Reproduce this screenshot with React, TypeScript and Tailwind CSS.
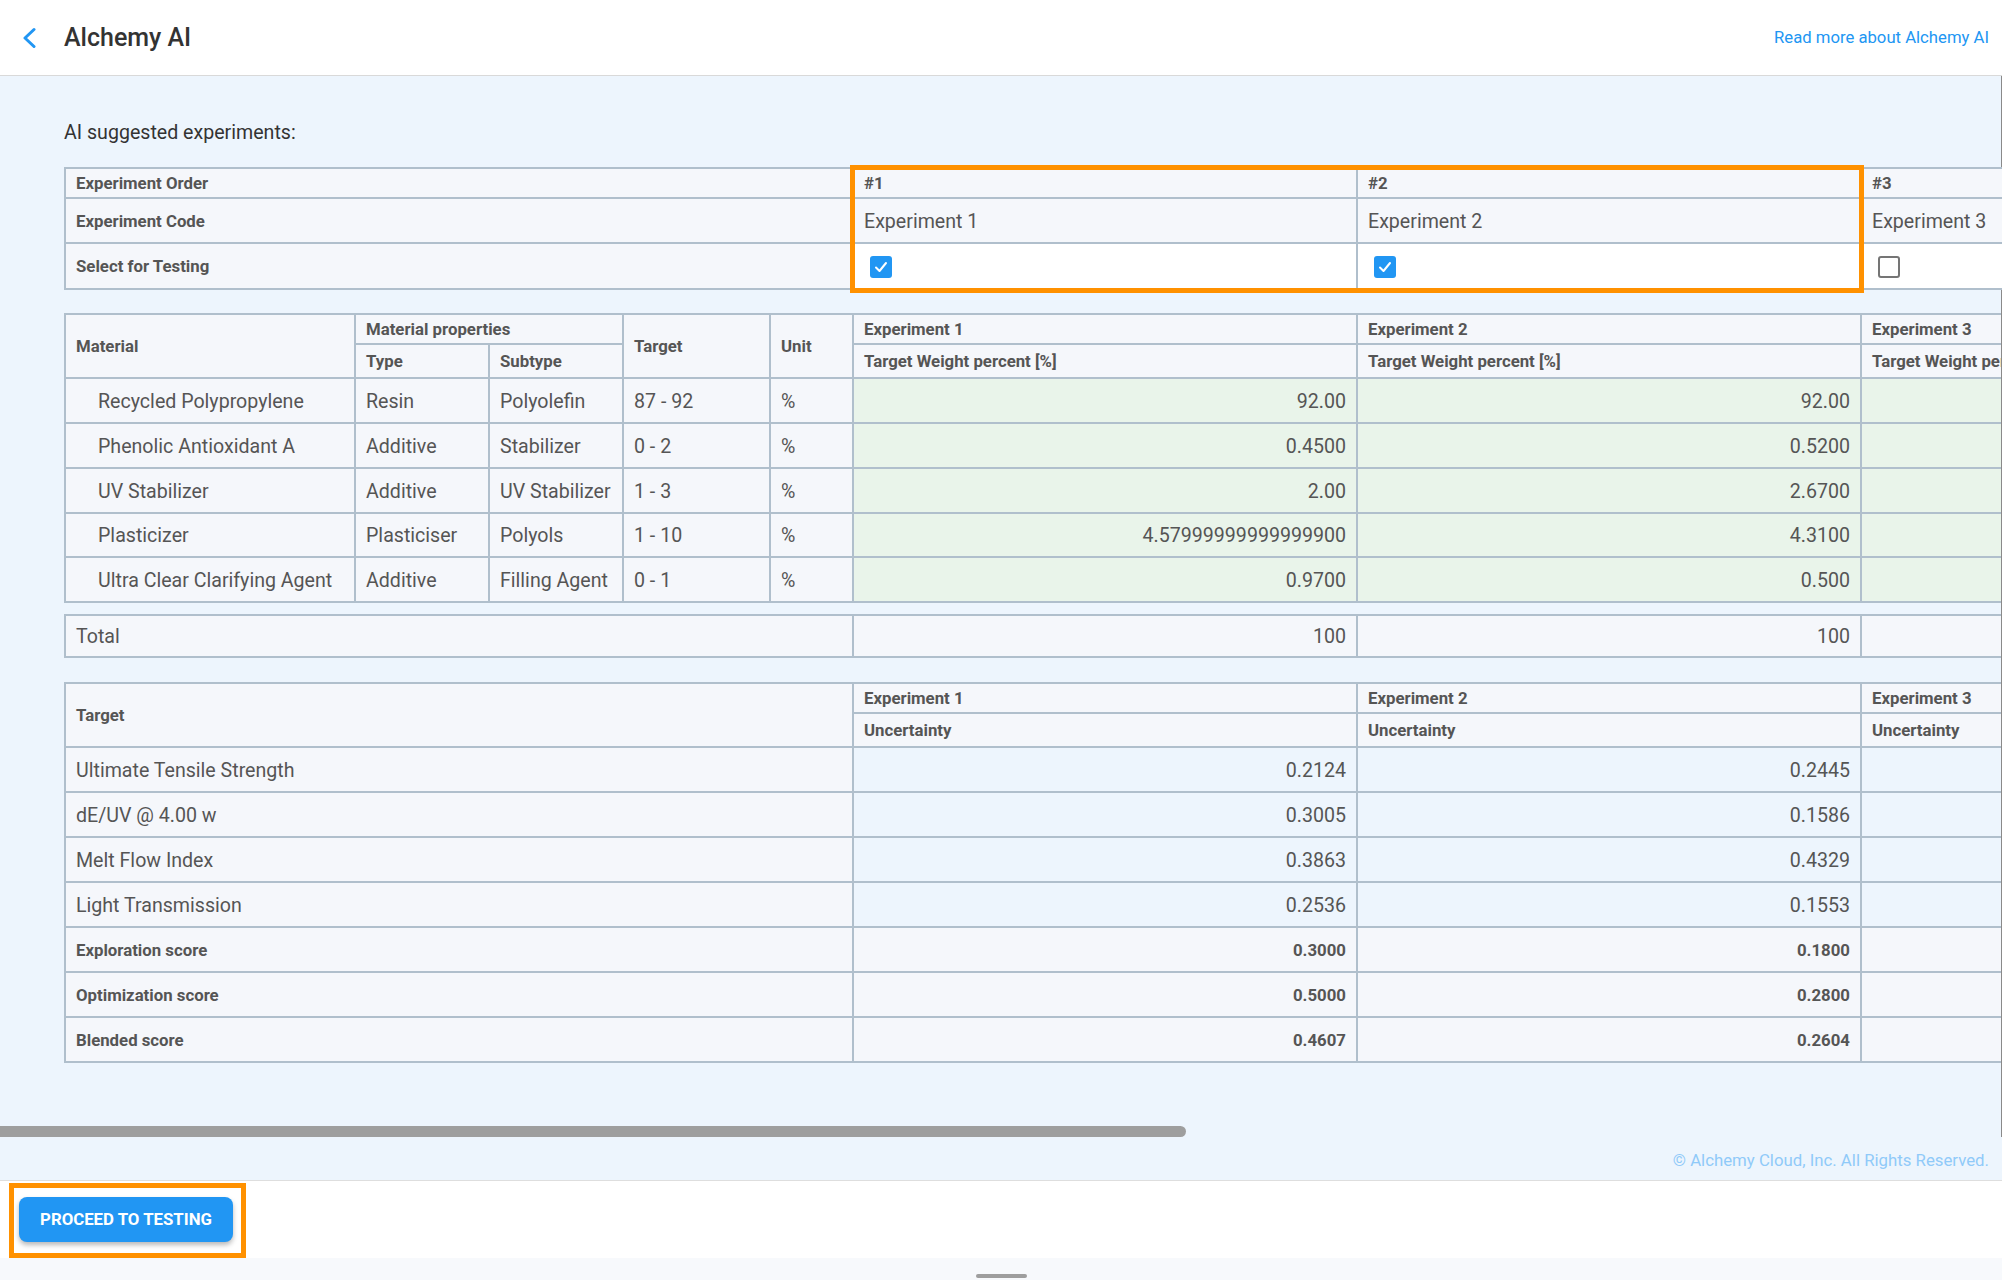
import React from "react";

const cell = "flex items-center border-r-2 border-b-2 border-[#b0bfcc] px-[10px] pt-[2px] overflow-hidden whitespace-nowrap";
const hd = "text-[16.8px] font-bold text-[#555555]";
const bd = "text-[19.6px] text-[#555555]";
const gray = "bg-[#f5f7fb]";
const green = "bg-[#e9f4ea]";
const blue = "bg-[#edf5fd]";

const exps = ["Experiment 1", "Experiment 2", "Experiment 3"];

const materials: [string, string, string, string, string, string[]][] = [
  ["Recycled Polypropylene", "Resin", "Polyolefin", "87 - 92", "%", ["92.00", "92.00", "90.00"]],
  ["Phenolic Antioxidant A", "Additive", "Stabilizer", "0 - 2", "%", ["0.4500", "0.5200", "0.6100"]],
  ["UV Stabilizer", "Additive", "UV Stabilizer", "1 - 3", "%", ["2.00", "2.6700", "1.9000"]],
  ["Plasticizer", "Plasticiser", "Polyols", "1 - 10", "%", ["4.57999999999999900", "4.3100", "6.5400"]],
  ["Ultra Clear Clarifying Agent", "Additive", "Filling Agent", "0 - 1", "%", ["0.9700", "0.500", "0.9500"]],
];

const targets: [string, string[]][] = [
  ["Ultimate Tensile Strength", ["0.2124", "0.2445", "0.2310"]],
  ["dE/UV @ 4.00 w", ["0.3005", "0.1586", "0.2011"]],
  ["Melt Flow Index", ["0.3863", "0.4329", "0.3120"]],
  ["Light Transmission", ["0.2536", "0.1553", "0.1902"]],
];

const scores: [string, string[]][] = [
  ["Exploration score", ["0.3000", "0.1800", "0.1500"]],
  ["Optimization score", ["0.5000", "0.2800", "0.2100"]],
  ["Blended score", ["0.4607", "0.2604", "0.2230"]],
];

function Checked() {
  return (
    <div className="w-[22px] h-[22px] rounded-[3px] bg-[#2196f3] flex items-center justify-center">
      <svg width="16" height="16" viewBox="0 0 16 16">
        <polyline points="3,8.5 6.5,12 13,4" fill="none" stroke="white" strokeWidth="2" strokeLinecap="round" strokeLinejoin="round" />
      </svg>
    </div>
  );
}

function Unchecked() {
  return <div className="w-[22px] h-[22px] rounded-[3px] border-2 border-[#757575] bg-white" />;
}

export default function App() {
  return (
    <div className="w-[2002px] h-[1280px] flex flex-col bg-[#f7f9fc] font-['Roboto',sans-serif] overflow-hidden">
      {/* Header */}
      <header className="h-[76px] shrink-0 bg-white border-b border-[#d9d9d9] flex items-center pl-[22px] pr-[13px]">
        <svg width="14" height="22" viewBox="0 0 14 22" className="shrink-0">
          <polyline points="12,2.5 3,11 12,19.5" fill="none" stroke="#2196f3" strokeWidth="3" strokeLinecap="round" strokeLinejoin="round" />
        </svg>
        <h1 className="ml-[28px] text-[25px] font-medium text-[#333333] leading-none">Alchemy AI</h1>
        <a className="ml-auto text-[16.7px] text-[#2196f3]">Read more about Alchemy AI</a>
      </header>

      {/* Main */}
      <main className="relative flex-1 bg-[#edf5fd] overflow-hidden flex flex-col">
        <div className="absolute right-0 top-0 w-[1px] h-[1061px] bg-[#8a8a8a]" />
        <div className="pt-[45px] pl-[64px] text-[19.6px] leading-[24px] text-[#333333]">AI suggested experiments:</div>

        {/* Table 1 */}
        <div className="relative w-max ml-[64px] mt-[22px]">
          <div className="grid w-max grid-cols-[788px_504px_504px_504px] grid-rows-[30px_45px_46px] border-t-2 border-l-2 border-[#b0bfcc]">
            <div className={`${cell} ${gray} ${hd}`}>Experiment Order</div>
            <div className={`${cell} ${gray} ${hd}`}>#1</div>
            <div className={`${cell} ${gray} ${hd}`}>#2</div>
            <div className={`${cell} ${gray} ${hd}`}>#3</div>

            <div className={`${cell} ${gray} ${hd}`}>Experiment Code</div>
            {exps.map((e) => (
              <div key={e} className={`${cell} ${gray} ${bd}`}>{e}</div>
            ))}

            <div className={`${cell} ${gray} ${hd}`}>Select for Testing</div>
            <div className={`${cell} bg-white pl-[16px]`}><Checked /></div>
            <div className={`${cell} bg-white pl-[16px]`}><Checked /></div>
            <div className={`${cell} bg-white pl-[16px]`}><Unchecked /></div>
          </div>
          <div className="absolute left-[786px] top-[-2px] w-[1014px] h-[128px] border-[5px] border-[#ff9100] pointer-events-none" />
        </div>

        {/* Table 2 - materials */}
        <div className="grid w-max ml-[64px] mt-[23px] grid-cols-[290px_134px_134px_147px_83px_504px_504px_504px] grid-rows-[30px_34px_45px_45px_45px_44px_45px] border-t-2 border-l-2 border-[#b0bfcc]">
          <div className={`${cell} ${gray} ${hd} row-span-2`}>Material</div>
          <div className={`${cell} ${gray} ${hd} col-span-2`}>Material properties</div>
          <div className={`${cell} ${gray} ${hd} row-span-2`}>Target</div>
          <div className={`${cell} ${gray} ${hd} row-span-2`}>Unit</div>
          {exps.map((e) => (
            <div key={e} className={`${cell} ${gray} ${hd}`}>{e}</div>
          ))}
          <div className={`${cell} ${gray} ${hd}`}>Type</div>
          <div className={`${cell} ${gray} ${hd}`}>Subtype</div>
          {exps.map((e) => (
            <div key={e} className={`${cell} ${gray} ${hd}`}>Target Weight percent [%]</div>
          ))}
          {materials.map(([name, type, sub, target, unit, vals]) => (
            <React.Fragment key={name}>
              <div className={`${cell} ${gray} ${bd} pl-[32px]`}>{name}</div>
              <div className={`${cell} ${gray} ${bd}`}>{type}</div>
              <div className={`${cell} ${gray} ${bd}`}>{sub}</div>
              <div className={`${cell} ${gray} ${bd}`}>{target}</div>
              <div className={`${cell} ${gray} ${bd}`}>{unit}</div>
              {vals.map((v, i) => (
                <div key={i} className={`${cell} ${green} ${bd} justify-end`}>{v}</div>
              ))}
            </React.Fragment>
          ))}
        </div>

        {/* Total */}
        <div className="grid w-max ml-[64px] mt-[11px] grid-cols-[788px_504px_504px_504px] grid-rows-[42px] border-t-2 border-l-2 border-[#b0bfcc]">
          <div className={`${cell} ${gray} ${bd}`}>Total</div>
          <div className={`${cell} ${gray} ${bd} justify-end`}>100</div>
          <div className={`${cell} ${gray} ${bd} justify-end`}>100</div>
          <div className={`${cell} ${gray} ${bd} justify-end`}>100</div>
        </div>

        {/* Table 3 - targets */}
        <div className="grid w-max ml-[64px] mt-[24px] grid-cols-[788px_504px_504px_504px] grid-rows-[30px_34px_45px_45px_45px_45px_45px_45px_45px] border-t-2 border-l-2 border-[#b0bfcc]">
          <div className={`${cell} ${gray} ${hd} row-span-2`}>Target</div>
          {exps.map((e) => (
            <div key={e} className={`${cell} ${gray} ${hd}`}>{e}</div>
          ))}
          {exps.map((e) => (
            <div key={e} className={`${cell} ${gray} ${hd}`}>Uncertainty</div>
          ))}
          {targets.map(([name, vals]) => (
            <React.Fragment key={name}>
              <div className={`${cell} ${gray} ${bd}`}>{name}</div>
              {vals.map((v, i) => (
                <div key={i} className={`${cell} ${blue} ${bd} justify-end`}>{v}</div>
              ))}
            </React.Fragment>
          ))}
          {scores.map(([name, vals]) => (
            <React.Fragment key={name}>
              <div className={`${cell} ${gray} ${hd}`}>{name}</div>
              {vals.map((v, i) => (
                <div key={i} className={`${cell} ${gray} ${hd} justify-end`}>{v}</div>
              ))}
            </React.Fragment>
          ))}
        </div>

        {/* Horizontal scrollbar thumb */}
        <div className="mt-[63px] w-[1186px] h-[11px] bg-[#9e9e9e] rounded-r-full shrink-0" />

        <div className="mt-[13px] pr-[13px] text-right text-[16.8px] leading-[20px] text-[#90caf9]">
          © Alchemy Cloud, Inc. All Rights Reserved.
        </div>
      </main>

      {/* Footer */}
      <footer className="h-[78px] shrink-0 bg-white border-t border-[#dedede] pl-[9px] pt-[2px]">
        <div className="w-[237px] h-[75px] border-[5px] border-[#ff9100] pl-[5px] pt-[9px]">
          <button className="w-[214px] h-[45px] rounded-[8px] bg-[#2196f3] text-white text-[16.8px] font-bold shadow-[0_3px_5px_rgba(0,0,0,0.28)]">
            PROCEED TO TESTING
          </button>
        </div>
      </footer>

      <div className="h-[22px] shrink-0 bg-[#f7f9fc] flex justify-center items-end pb-[2px]">
        <div className="w-[51px] h-[4px] rounded-full bg-[#9e9e9e]" />
      </div>
    </div>
  );
}
